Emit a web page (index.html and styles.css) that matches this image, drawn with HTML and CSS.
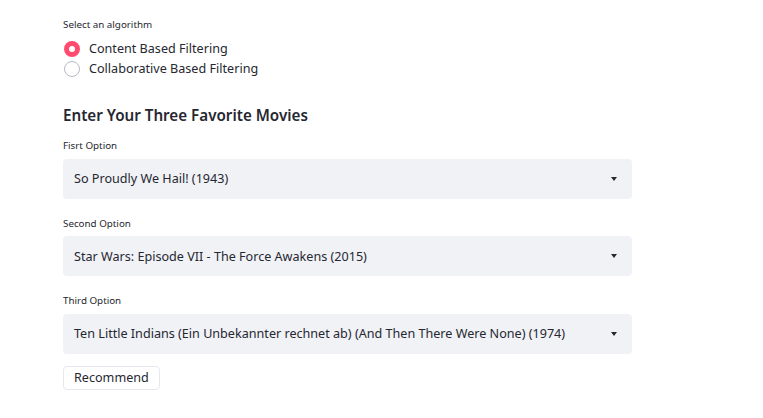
FILE: index.html
```html
<!DOCTYPE html>
<html>
<head>
<meta charset="utf-8">
<link rel="stylesheet" href="styles.css">
</head>
<body>
<main class="main">
  <div class="field">
    <div class="label">Select an algorithm</div>
    <div class="radios">
      <label class="radio"><span class="dot checked"></span><span>Content Based Filtering</span></label>
      <label class="radio"><span class="dot"></span><span>Collaborative Based Filtering</span></label>
    </div>
  </div>
  <h3 class="heading">Enter Your Three Favorite Movies</h3>
  <div class="field">
    <div class="label">Fisrt Option</div>
    <div class="select"><span>So Proudly We Hail! (1943)</span><span class="caret"></span></div>
  </div>
  <div class="field">
    <div class="label">Second Option</div>
    <div class="select"><span>Star Wars: Episode VII - The Force Awakens (2015)</span><span class="caret"></span></div>
  </div>
  <div class="field">
    <div class="label">Third Option</div>
    <div class="select"><span>Ten Little Indians (Ein Unbekannter rechnet ab) (And Then There Were None) (1974)</span><span class="caret"></span></div>
  </div>
  <button class="btn">Recommend</button>
</main>
</body>
</html>
```
FILE: styles.css
```css
html, body { margin: 0; padding: 0; background: #fff; }
body {
  font-family: "Noto Sans", "Open Sans", sans-serif;
  color: #262730;
}
.main {
  width: 569px;
  padding: 17px 0 0 63px;
  display: flex;
  flex-direction: column;
}
.label {
  font-size: 9.8px;
  line-height: 14px;
  color: #262730;
  padding-top: 1px;
  margin-bottom: 6.5px;
}
.field .label.opt {
  padding-top: 2px;
}
.radios { display: flex; flex-direction: column; gap: 4px; margin-top: 2.5px; }
.radio {
  display: flex;
  align-items: center;
  gap: 9px;
  font-size: 12.6px;
  line-height: 16px;
  padding-left: 1px;
}
.dot {
  width: 16px; height: 16px;
  box-sizing: border-box;
  border-radius: 50%;
  border: 1px solid #b8bac2;
  background: #fff;
  flex: none;
}
.dot.checked {
  border: 5px solid #ff4b6e;
  background: #fff;
}
.heading {
  margin: 11px 0 11px;
  font-size: 15.2px;
  font-weight: 600;
  line-height: 22px;
  color: #262730;
}
.heading ~ .field .label {
  padding-top: 2px;
  margin-bottom: 5.5px;
}
.field { margin-bottom: 16px; display: flex; flex-direction: column; }
.select {
  height: 40px;
  background: #f0f2f6;
  border-radius: 4px;
  display: flex;
  align-items: center;
  justify-content: space-between;
  padding: 0 15px 0 11px;
  font-size: 12.6px;
}
.caret {
  width: 0; height: 0;
  border-left: 3.5px solid transparent;
  border-right: 3.5px solid transparent;
  border-top: 4px solid #262730;
}
.btn {
  align-self: flex-start;
  margin-top: -4px;
  font-family: inherit;
  font-size: 12.6px;
  color: #262730;
  background: #fff;
  border: 1px solid #e6e8ee;
  border-radius: 4px;
  height: 24px;
  padding: 0 10px;
}
```
